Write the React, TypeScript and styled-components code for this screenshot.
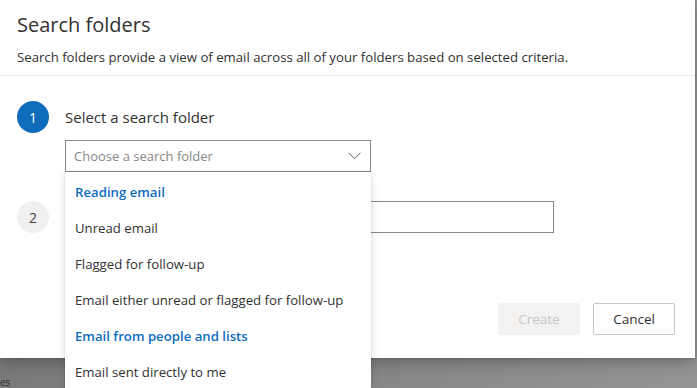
import React from 'react'
import styled, { createGlobalStyle } from 'styled-components'

const GlobalStyle = createGlobalStyle`
    html, body {
        margin: 0;
        padding: 0;
        height: 388px;
        overflow: hidden;
    }
    body {
        font-family: "Open Sans", "Noto Sans", "Liberation Sans", sans-serif;
        background: linear-gradient(to right, #7a7a7a 0%, #868686 50%, #949494 100%);
    }
    * {
        box-sizing: border-box;
    }
`

type TypeOption = {
    label: string
    isGroup?: boolean
}

const options: TypeOption[] = [
    { label: 'Reading email', isGroup: true },
    { label: 'Unread email' },
    { label: 'Flagged for follow-up' },
    { label: 'Email either unread or flagged for follow-up' },
    { label: 'Email from people and lists', isGroup: true },
    { label: 'Email sent directly to me' },
]

const Chevron = () => (
    <svg width="13" height="8" viewBox="0 0 13 8" fill="none">
        <path d="M0.6 0.8 L6.5 6.6 L12.4 0.8" stroke="#605e5c" strokeWidth="1" />
    </svg>
)

export default function App() {
    return (
        <Page>
            <GlobalStyle />
            <Dialog>
                <Header>
                    <Title>Search folders</Title>
                    <Description>
                        Search folders provide a view of email across all of your folders based on selected criteria.
                    </Description>
                </Header>
                <Body>
                    <StepRow>
                        <StepCircle active>1</StepCircle>
                        <StepLabel>Select a search folder</StepLabel>
                    </StepRow>
                    <StepContent>
                        <SelectWrap>
                            <SelectBox>
                                <Placeholder>Choose a search folder</Placeholder>
                                <Chevron />
                            </SelectBox>
                            <Dropdown>
                                {options.map((o) => (
                                    <Option key={o.label} isGroup={o.isGroup}>
                                        {o.label}
                                    </Option>
                                ))}
                            </Dropdown>
                        </SelectWrap>
                    </StepContent>
                    <StepRowInput>
                        <StepCircle>2</StepCircle>
                        <NameInput />
                    </StepRowInput>
                </Body>
                <Footer>
                    <Button disabled>Create</Button>
                    <Button>Cancel</Button>
                </Footer>
            </Dialog>
            <BackdropText>es</BackdropText>
        </Page>
    )
}

const Page = styled.div`
    position: relative;
    width: 697px;
    height: 388px;
`
const Dialog = styled.div`
    width: 695px;
    height: 358px;
    background: #ffffff;
    color: #323130;
    display: flex;
    flex-direction: column;
    box-shadow: 0 6px 14px rgba(0, 0, 0, 0.22), 0 1px 3px rgba(0, 0, 0, 0.12);
    position: relative;
    z-index: 1;
`
const Header = styled.div`
    padding: 11px 17px 0 17px;
    height: 76px;
    border-bottom: 1px solid #e8e8e8;
`
const Title = styled.h1`
    margin: 0;
    font-size: 20px;
    font-weight: 500;
    line-height: 28px;
    color: #323130;
`
const Description = styled.p`
    margin: 9px 0 0 0;
    font-size: 13.2px;
    line-height: 18px;
    color: #323130;
`
const Body = styled.div`
    padding: 25px 0 0 17px;
    display: flex;
    flex-direction: column;
`
const StepRow = styled.div`
    display: flex;
    align-items: center;
    gap: 16px;
    height: 32px;
`
const StepRowInput = styled.div`
    display: flex;
    align-items: center;
    gap: 16px;
    margin-top: 29px;
`
const StepCircle = styled.div<{ active?: boolean }>`
    width: 32px;
    height: 32px;
    border-radius: 50%;
    flex-shrink: 0;
    display: flex;
    align-items: center;
    justify-content: center;
    font-size: 14px;
    background: ${(p) => (p.active ? '#0f6cbd' : '#f0f0f0')};
    color: ${(p) => (p.active ? '#ffffff' : '#484644')};
`
const StepLabel = styled.span`
    font-size: 15px;
    color: #323130;
`
const StepContent = styled.div`
    padding-left: 48px;
    margin-top: 7px;
`
const SelectWrap = styled.div`
    position: relative;
    width: 306px;
`
const SelectBox = styled.div`
    height: 32px;
    border: 1px solid #8a8886;
    display: flex;
    align-items: center;
    justify-content: space-between;
    padding: 0 9px 0 8px;
`
const Placeholder = styled.span`
    font-size: 13px;
    color: #8a8886;
`
const Dropdown = styled.div`
    position: absolute;
    top: 100%;
    left: 0;
    width: 306px;
    background: #ffffff;
    padding-top: 2px;
    z-index: 5;
    box-shadow: 0 3px 8px rgba(0, 0, 0, 0.14), 0 1px 2px rgba(0, 0, 0, 0.1);
`
const Option = styled.div<{ isGroup?: boolean }>`
    height: 36px;
    display: flex;
    align-items: center;
    padding-left: 10px;
    font-size: 13.2px;
    font-weight: ${(p) => (p.isGroup ? 600 : 400)};
    color: ${(p) => (p.isGroup ? '#0f6cbd' : '#323130')};
    white-space: nowrap;
`
const NameInput = styled.div`
    width: 489px;
    height: 32px;
    border: 1px solid #8a8886;
`
const Footer = styled.div`
    margin-top: auto;
    padding: 0 20px 23px 0;
    display: flex;
    justify-content: flex-end;
    gap: 13px;
`
const Button = styled.button`
    height: 32px;
    min-width: 82px;
    padding: 0 12px;
    font-family: inherit;
    font-size: 13.5px;
    font-weight: 500;
    border-radius: 2px;
    border: 1px solid ${(p) => (p.disabled ? '#f3f2f1' : '#c8c6c4')};
    background: ${(p) => (p.disabled ? '#f3f2f1' : '#ffffff')};
    color: ${(p) => (p.disabled ? '#c8c6c4' : '#323130')};
`
const BackdropText = styled.span`
    position: absolute;
    left: 0;
    bottom: 0;
    font-size: 10px;
    line-height: 11px;
    color: #2a2a2a;
`
